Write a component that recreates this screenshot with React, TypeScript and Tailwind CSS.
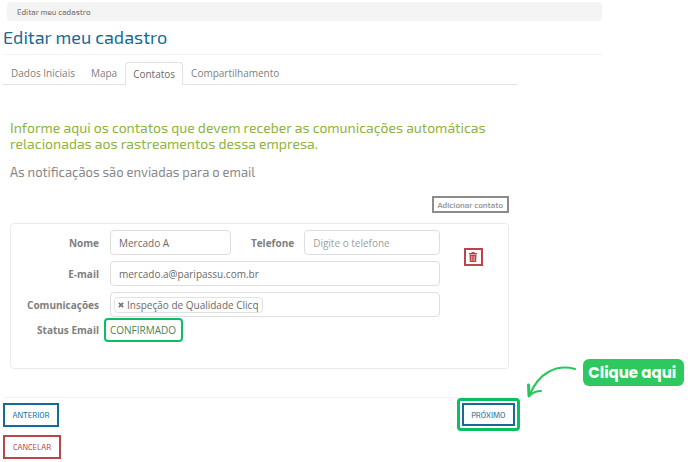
const tabs = ["Dados Iniciais", "Mapa", "Contatos", "Compartilhamento"];

const labelClass = "w-[88px] shrink-0 text-right font-bold text-[#808080]";
const inputClass =
  "h-[25px] min-w-0 rounded border border-[#dedede] bg-white px-2 text-[10px] text-[#6a6a6a] placeholder:text-[#a0a0a0] outline-none";

const Tabs = () => {
  return (
    <nav className="flex h-[23px] w-full border-b border-[#e2e2e2]">
      {tabs.map((tab) => (
        <a
          key={tab}
          href="#"
          className={
            tab === "Contatos"
              ? "-mb-px flex items-center rounded-t border border-b-0 border-[#e2e2e2] bg-white px-[7px] text-[#6a6a6a]"
              : "flex items-center px-2 text-[#808080]"
          }
        >
          {tab}
        </a>
      ))}
    </nav>
  );
};

const ContactCard = () => {
  return (
    <form className="mt-[10px] flex rounded-sm border border-[#ebebeb] pt-[6px] pb-[26px]">
      <div className="flex min-w-0 flex-1 flex-col gap-[6px]">
        <div className="flex items-center">
          <label htmlFor="nome" className={labelClass}>Nome</label>
          <input id="nome" defaultValue="Mercado A" className={`${inputClass} ml-[11px] w-[120px] flex-[7]`} />
          <label htmlFor="telefone" className="ml-5 font-bold text-[#808080]">Telefone</label>
          <input id="telefone" placeholder="Digite o telefone" className={`${inputClass} ml-[10px] w-[137px] flex-[8]`} />
        </div>
        <div className="flex items-center">
          <label htmlFor="email" className={labelClass}>E-mail</label>
          <input id="email" type="email" defaultValue="mercado.a@paripassu.com.br" className={`${inputClass} ml-[11px] flex-1`} />
        </div>
        <div className="flex items-center">
          <span className={labelClass}>Comunicações</span>
          <div className="ml-[11px] flex h-[25px] min-w-0 flex-1 items-center rounded border border-[#dedede] px-[3px]">
            <span className="flex h-4 items-center gap-[3px] rounded-sm border border-[#e2e2e2] px-[3px] whitespace-nowrap text-[#6a6a6a]">
              <button type="button" aria-label="Remover" className="flex size-[6px] items-center">
                <svg viewBox="0 0 7 7" className="size-[6px]" stroke="#777777" strokeWidth="2">
                  <path d="M1 1l5 5M6 1L1 6" />
                </svg>
              </button>
              Inspeção de Qualidade Clicq
            </span>
          </div>
        </div>
        <div className="-mt-[5px] flex items-center">
          <span className={labelClass}>Status Email</span>
          <span className="ml-[5px] flex h-6 w-[79px] items-center rounded-sm border-2 border-[#0abf62] px-1 text-[#4f7f52]">
            CONFIRMADO
          </span>
        </div>
      </div>
      <div className="w-[68px] shrink-0 pt-[18px] pl-6">
        <button type="button" aria-label="Excluir contato" className="flex h-[18px] w-[19px] items-center justify-center border-2 border-[#bd4448] text-[#bd4448]">
          <svg viewBox="0 0 8 10" className="h-[10px] w-2" fill="currentColor">
            <path d="M2.5 0h3v1H8v1.500H0V1h2.500zM.5 3h7l-.3 7H.8z" />
            <path d="M2.500 4v5M4 4v5M5.500 4v5" stroke="#ffffff" strokeWidth=".4" />
          </svg>
        </button>
      </div>
    </form>
  );
};

const Callout = () => {
  return (
    <div className="absolute bottom-[30px] left-full ml-[10px] flex items-start">
      <svg viewBox="0 0 51 33" className="mt-[6px] h-[33px] w-[51px]" fill="none" stroke="#27c75a" strokeLinecap="round" strokeLinejoin="round">
        <path d="M48 4C29-1 12 8 3 29" strokeWidth="2" />
        <path d="M1.500 20L2 31" strokeWidth="3" />
        <path d="M2 31C5 28 9 26 14 26" strokeWidth="2" />
      </svg>
      <span className="ml-[5px] flex h-[27px] w-[101px] items-center justify-center rounded-md bg-[#2dc95f] pr-[2px] font-['Poppins','Inter',sans-serif] text-[15px] font-bold whitespace-nowrap text-white">
        Clique aqui
      </span>
    </div>
  );
};

const App = () => {
  return (
    <main className="overflow-hidden bg-white pt-[2px] pb-[2px] pl-[3px] font-['Open_Sans',sans-serif] text-[10px] leading-4">
      <header className="w-7/8 border-b border-[#f3f3f3] font-['Exo_2','Open_Sans',sans-serif]">
        <div className="ml-1 flex h-[19px] items-center rounded-sm bg-[#f4f4f4] pl-[10px] text-[8px] font-medium text-[#777777]">
          Editar meu cadastro
        </div>
        <h1 className="pt-1 pb-[5px] text-[18px] leading-6 text-[#156b96]">Editar meu cadastro</h1>
      </header>

      <div className="mt-[7px] w-3/4">
        <Tabs />
        <section className="mr-2 ml-[7px] pt-[35px]">
          <h2 className="font-['Exo_2','Open_Sans',sans-serif] text-[14px] text-[#8db53c]">
            Informe aqui os contatos que devem receber as comunicações automáticas relacionadas aos rastreamentos dessa empresa.
          </h2>
          <p className="mt-3 font-['Exo_2','Open_Sans',sans-serif] text-[13px] text-[#888888]">
            As notificaçãos são enviadas para o email
          </p>
          <div className="mt-4 flex justify-end">
            <button type="button" className="h-[17px] w-[77px] border-2 border-[#8c8c8c] font-['Exo_2','Open_Sans',sans-serif] text-[8px] leading-3 font-semibold whitespace-nowrap text-[#999999]">
              Adicionar contato
            </button>
          </div>
          <ContactCard />
        </section>

        <footer className="mt-7 border-t border-[#f3f3f3] font-['Exo_2','Open_Sans',sans-serif] text-[8px]">
          <div className="flex items-center justify-between">
            <button type="button" className="h-6 w-14 border-2 border-[#156b96] text-[#156b96]">ANTERIOR</button>
            <div className="relative -mr-[3px] rounded-sm border-3 border-[#0abf62] p-[2px]">
              <button type="button" className="block h-[23px] w-[53px] border-2 border-[#156b96] text-[#156b96]">PRÓXIMO</button>
              <Callout />
            </div>
          </div>
          <button type="button" className="mt-1 h-6 w-[58px] border-2 border-[#bd4448] text-[#bd4448]">CANCELAR</button>
        </footer>
      </div>
    </main>
  );
};

export default App;
